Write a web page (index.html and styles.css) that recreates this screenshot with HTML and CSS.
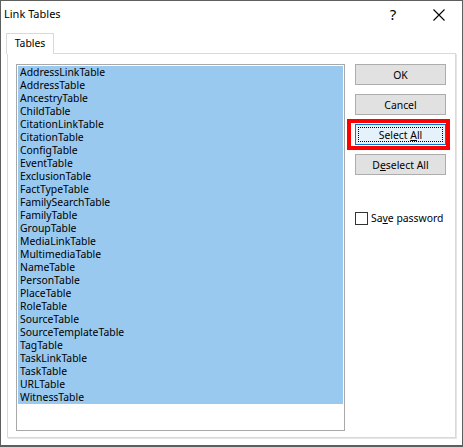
FILE: index.html
```html
<!DOCTYPE html>
<html>
<head>
<meta charset="utf-8">
<link rel="stylesheet" href="styles.css">
</head>
<body>
<div class="window">
  <div class="titlebar">
    <div class="title">Link Tables</div>
    <div class="tb-btn help">?</div>
    <div class="tb-btn close">
      <svg width="12" height="12" viewBox="0 0 12 12"><path d="M0.5 0.5 L11.5 11.5 M11.5 0.5 L0.5 11.5" stroke="#000" stroke-width="1.1" fill="none"/></svg>
    </div>
  </div>
  <div class="tabstrip">
    <div class="tab">Tables</div>
  </div>
  <div class="panel">
    <div class="listbox">
      <div class="item">AddressLinkTable</div>
      <div class="item">AddressTable</div>
      <div class="item">AncestryTable</div>
      <div class="item">ChildTable</div>
      <div class="item">CitationLinkTable</div>
      <div class="item">CitationTable</div>
      <div class="item">ConfigTable</div>
      <div class="item">EventTable</div>
      <div class="item">ExclusionTable</div>
      <div class="item">FactTypeTable</div>
      <div class="item">FamilySearchTable</div>
      <div class="item">FamilyTable</div>
      <div class="item">GroupTable</div>
      <div class="item">MediaLinkTable</div>
      <div class="item">MultimediaTable</div>
      <div class="item">NameTable</div>
      <div class="item">PersonTable</div>
      <div class="item">PlaceTable</div>
      <div class="item">RoleTable</div>
      <div class="item">SourceTable</div>
      <div class="item">SourceTemplateTable</div>
      <div class="item">TagTable</div>
      <div class="item">TaskLinkTable</div>
      <div class="item">TaskTable</div>
      <div class="item">URLTable</div>
      <div class="item">WitnessTable</div>
    </div>
    <div class="side">
      <div class="btn"><span>OK</span></div>
      <div class="btn"><span>Cancel</span></div>
      <div class="btn-wrap">
        <div class="btn focused"><span class="focus"><span>Select <u>A</u>ll</span></span></div>
        <div class="highlight"></div>
      </div>
      <div class="btn"><span>D<u>e</u>select All</span></div>
      <label class="check"><span class="box"></span><span>Sa<u>v</u>e password</span></label>
    </div>
  </div>
</div>
</body>
</html>
```
FILE: styles.css
```css
html, body {
  margin: 0;
  padding: 0;
  background: #ffffff;
}
.window {
  width: 463px;
  height: 447px;
  box-sizing: border-box;
  border: 1px solid #5e5e5e;
  border-bottom-width: 2px;
  background: #ffffff;
  font-family: "Noto Sans", "Liberation Sans", sans-serif;
  font-size: 10.4px;
  color: #000;
  display: flex;
  flex-direction: column;
}
.titlebar {
  height: 28px;
  display: flex;
  align-items: center;
  flex-shrink: 0;
}
.title {
  flex: 1;
  padding-left: 3px;
  font-size: 11px;
  margin-top: -3px;
}
.tb-btn {
  width: 46px;
  height: 28px;
  display: flex;
  align-items: center;
  justify-content: center;
}
.help {
  font-size: 15px;
  margin-top: -3px;
}
.tabstrip {
  height: 24px;
  padding-left: 5px;
  display: flex;
  align-items: flex-end;
  flex-shrink: 0;
}
.tab {
  height: 21px;
  width: 48px;
  box-sizing: border-box;
  border: 1px solid #d9d9d9;
  border-bottom: none;
  background: #fff;
  text-align: center;
  line-height: 19px;
  position: relative;
  top: 1px;
}
.panel {
  margin-left: 6px;
  width: 449px;
  height: 385px;
  box-sizing: border-box;
  border: 1px solid #d9d9d9;
  box-shadow: 1px 1px 0 #e6e6e6;
  display: flex;
  align-items: flex-start;
  padding: 10px 0 0 8px;
  gap: 10px;
}
.listbox {
  width: 329px;
  height: 367px;
  box-sizing: border-box;
  border: 1px solid #a8a8a8;
  padding: 1px;
}
.item {
  height: 13px;
  line-height: 13px;
  background: #99c9ef;
  padding-left: 2px;
  color: #000;
  white-space: nowrap;
}
.side {
  width: 91px;
  display: flex;
  flex-direction: column;
  gap: 9px;
}
.btn {
  width: 91px;
  height: 21px;
  box-sizing: border-box;
  border: 1px solid #adadad;
  background: #e1e1e1;
  display: flex;
  align-items: center;
  justify-content: center;
}
.btn-wrap {
  position: relative;
  width: 91px;
}
.btn.focused {
  border-color: #0078d7;
  background: #e5f1fb;
  padding: 2px;
}
.focus {
  flex: 1;
  align-self: stretch;
  border: 1px dotted #000;
  display: flex;
  align-items: center;
  justify-content: center;
}
.highlight {
  position: absolute;
  left: -8px;
  top: -5px;
  right: -4px;
  bottom: -5px;
  border: 4px solid #ff0000;
}
.check {
  display: flex;
  align-items: center;
  gap: 3px;
  margin-top: 27px;
  white-space: nowrap;
}
.box {
  width: 13px;
  height: 13px;
  flex-shrink: 0;
  box-sizing: border-box;
  border: 1px solid #333;
  background: #fff;
}
```
